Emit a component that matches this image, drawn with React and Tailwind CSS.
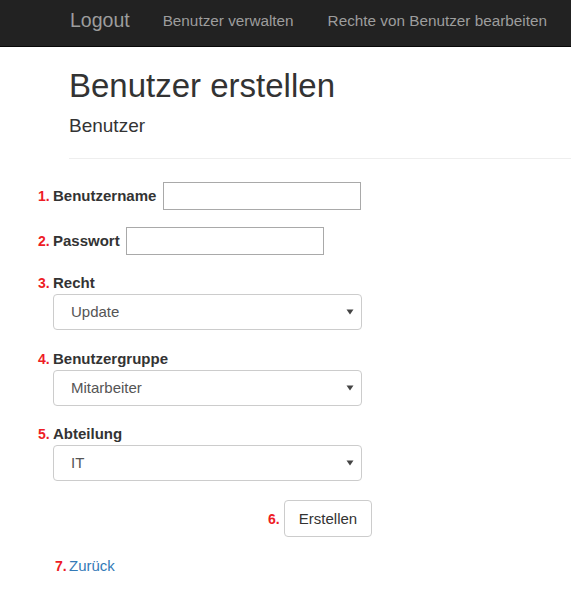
import React from "react";

const RED = "text-[#ee1c25]";

function Num({ n, className = "" }) {
  return (
    <span className={`${RED} font-bold text-[14px] leading-none ${className}`}>{n}.</span>
  );
}

function SelectBox({ value }) {
  return (
    <div className="relative mt-px ml-[15px] w-[309px]">
      <select
        defaultValue={value}
        className="block w-full h-[36px] appearance-none rounded-[4px] border border-[#ccc] bg-white pl-[17px] text-[15px] text-[#555] outline-none"
      >
        <option>{value}</option>
      </select>
      <svg
        className="pointer-events-none absolute right-[8px] top-[15px]"
        width="8"
        height="6"
        viewBox="0 0 8 6"
      >
        <path d="M0.5 0.5 H7.5 L4 5.5 Z" fill="#444" />
      </svg>
    </div>
  );
}

export default function App() {
  return (
    <div className="min-h-[594px] bg-white font-['Liberation_Sans',Arial,sans-serif] text-[#333]">
      <nav className="flex h-[47px] items-center pb-[4px] border-b border-[#080808] bg-[#222] text-[#9d9d9d]">
        <span className="ml-[70px] text-[19.5px] leading-none">Logout</span>
        <span className="ml-[33px] text-[15.3px] leading-none">Benutzer verwalten</span>
        <span className="ml-[34px] text-[15.3px] leading-none">Rechte von Benutzer bearbeiten</span>
      </nav>

      <div className="pl-[69px]">
        <h1 className="mt-[21px] text-[33px] leading-[1.1] font-normal">Benutzer erstellen</h1>
        <h4 className="mt-[11px] text-[19px] leading-[21px] font-normal">Benutzer</h4>
        <hr className="mt-[22px] border-t border-[#eee]" />
      </div>

      <form className="pl-[38px] text-[15px]">
        <div className="mt-[23px] flex items-center h-[28px]">
          <Num n={1} className="w-[15px]" />
          <label className="font-bold">Benutzername</label>
          <input className="ml-[7px] h-[28px] w-[198px] border border-[#a9a9a9] outline-none" />
        </div>

        <div className="mt-[17px] flex items-center h-[28px]">
          <Num n={2} className="w-[15px]" />
          <label className="font-bold">Passwort</label>
          <input type="password" className="ml-[6px] h-[28px] w-[198px] border border-[#a9a9a9] outline-none" />
        </div>

        <div className="mt-[18px] flex items-center h-[20px]">
          <Num n={3} className="w-[15px]" />
          <label className="font-bold">Recht</label>
        </div>
        <SelectBox value="Update" />

        <div className="mt-[19px] flex items-center h-[20px]">
          <Num n={4} className="w-[15px]" />
          <label className="font-bold">Benutzergruppe</label>
        </div>
        <SelectBox value="Mitarbeiter" />

        <div className="mt-[18px] flex items-center h-[20px]">
          <Num n={5} className="w-[15px]" />
          <label className="font-bold">Abteilung</label>
        </div>
        <SelectBox value="IT" />

        <div className="mt-[19px] flex items-center">
          <Num n={6} className="ml-[230px] w-[16px]" />
          <button
            type="button"
            className="h-[37px] w-[88px] rounded-[4px] border border-[#ccc] bg-white text-[15px] text-[#333]"
          >
            Erstellen
          </button>
        </div>

        <div className="mt-[19px] flex items-center h-[20px] pl-[17px]">
          <Num n={7} className="w-[14px]" />
          <a href="#" className="text-[#337ab7]">Zurück</a>
        </div>
      </form>
    </div>
  );
}
